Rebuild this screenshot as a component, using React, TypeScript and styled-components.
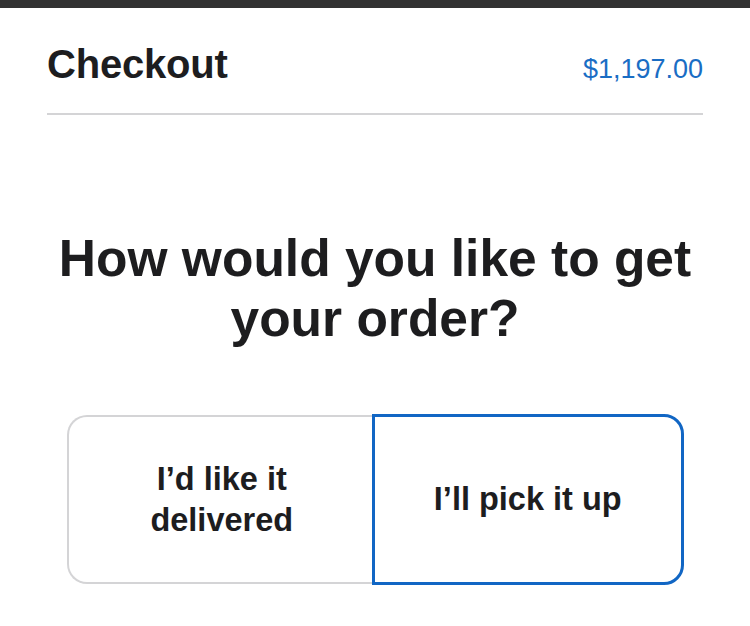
import { useState } from 'react';
import styled, { createGlobalStyle } from 'styled-components';

const GlobalStyle = createGlobalStyle`
  body {
    margin: 0;
    background: #ffffff;
    font-family: "Liberation Sans", Arial, sans-serif;
    color: #1d1d1f;
  }
`;

const Page = styled.div`
  min-height: 626px;
  background: #ffffff;
`;

const TopBar = styled.div`
  height: 8px;
  background: #323232;
`;

const Header = styled.header`
  margin: 0 47px;
  padding: 32px 0 25px;
  display: flex;
  align-items: baseline;
  justify-content: space-between;
  border-bottom: 2px solid #d4d4d6;
`;

const Title = styled.h1`
  margin: 0;
  font-size: 40px;
  line-height: 48px;
  font-weight: 700;
  letter-spacing: -0.2px;
`;

const Total = styled.span`
  font-size: 27px;
  color: #1a6dc4;
`;

const Question = styled.h2`
  margin: 113px auto 0;
  max-width: 660px;
  text-align: center;
  font-size: 51.5px;
  line-height: 60px;
  font-weight: 700;
`;

const Options = styled.div`
  width: 617px;
  height: 169px;
  margin: 67px auto 0;
  display: grid;
  grid-template-columns: 1fr 1fr;
`;

const Option = styled.button<{ $selected: boolean; $side: 'left' | 'right' }>`
  display: flex;
  align-items: center;
  justify-content: center;
  padding: 0 40px;
  background: #ffffff;
  font-family: inherit;
  font-size: 32.5px;
  line-height: 41px;
  font-weight: 700;
  color: #1d1d1f;
  cursor: pointer;
  border: ${p => (p.$selected ? '3px solid #1166c4' : '2px solid #d4d4d6')};
  border-radius: ${p => (p.$side === 'left' ? '20px 0 0 20px' : '0 20px 20px 0')};
  ${p => (!p.$selected && p.$side === 'left' ? 'border-right: none;' : '')}
  ${p => (p.$selected ? 'margin: -1px 0 -1px -3px; position: relative;' : '')}
`;

const options = [
  { id: 'delivery', label: 'I’d like it delivered', side: 'left' as const },
  { id: 'pickup', label: 'I’ll pick it up', side: 'right' as const },
];

export default function App() {
  const [choice, setChoice] = useState('pickup');

  return (
    <Page>
      <GlobalStyle />
      <TopBar />
      <Header>
        <Title>Checkout</Title>
        <Total>$1,197.00</Total>
      </Header>
      <Question>How would you like to get your order?</Question>
      <Options>
        {options.map(o => (
          <Option
            key={o.id}
            $side={o.side}
            $selected={choice === o.id}
            onClick={() => setChoice(o.id)}
          >
            {o.label}
          </Option>
        ))}
      </Options>
    </Page>
  );
}
